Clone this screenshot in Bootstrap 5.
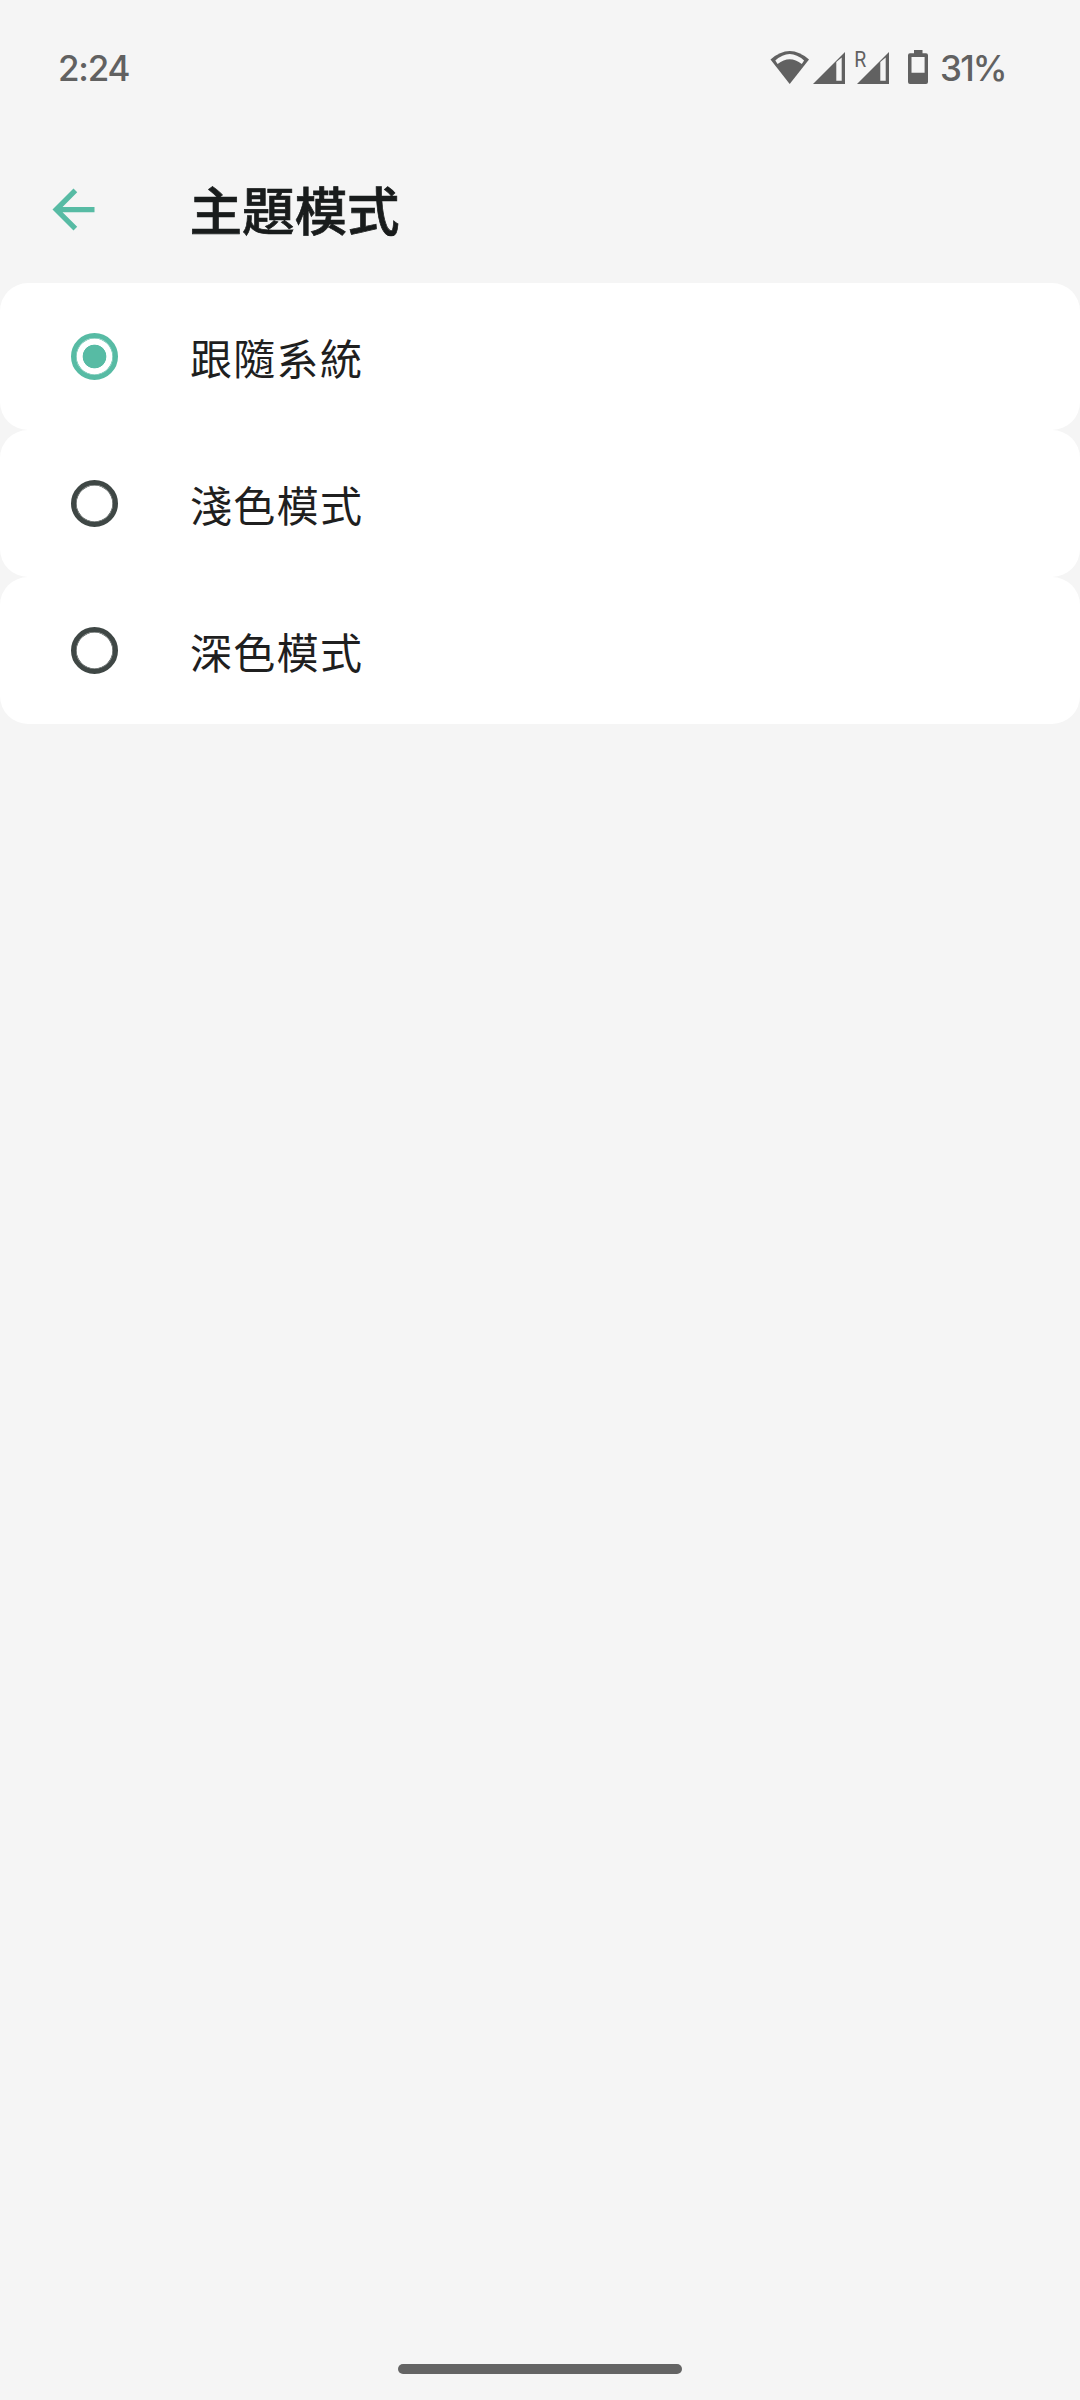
<!DOCTYPE html>
<html lang="zh-Hant">
<head>
<meta charset="utf-8">
<meta name="viewport" content="width=device-width, initial-scale=1">
<title>主題模式</title>
<link href="https://cdn.jsdelivr.net/npm/bootstrap@5.3.0/dist/css/bootstrap.min.css" rel="stylesheet">
<style>
body { background: #f5f5f5; font-family: "Noto Sans CJK TC", sans-serif; color: #1f1f1f; }
.screen { height: 2400px; }
.status-bar { height: 136px; padding: 0 0 0 58px; font: 500 35px/1 Inter, sans-serif; color: #616161; }
.clock { letter-spacing: -1.2px; }
.battery-level { width: 140px; margin-left: 10px; letter-spacing: -1.8px; }
.status-icons { width: 160px; height: 44px; }
.app-bar { height: 147px; padding-left: 42px; }
.back-btn { width: 63px; height: 63px; color: #57bba4; margin-right: 84.5px; }
.app-title { font-size: 52.5px; font-weight: 500; line-height: 76px; color: #191c1c; padding-bottom: 3px; -webkit-text-stroke: .7px; }
.theme-option { height: 147px; border-radius: 28px; padding-left: 71px; }
.theme-option .form-check-input { width: 47px; height: 47px; border: 5px solid #3f4745; background: none; box-shadow: inset 0 0 0 .6px #3f4745; margin: 0 72px 0 0; }
.theme-option .form-check-input:checked { border-color: #57bba4; box-shadow: inset 0 0 0 .6px #57bba4; background: radial-gradient(circle, #57bba4 11.5px, transparent 12.2px) center; }
.option-label { font-size: 42px; line-height: 60px; letter-spacing: 1.3px; }
.home-pill { width: 284px; height: 10px; background: #646464; margin-bottom: 26px; }
</style>
<script src="https://cdn.jsdelivr.net/npm/bootstrap@5.3.0/dist/js/bootstrap.bundle.min.js"></script>
</head>
<body>
<div class="screen d-flex flex-column overflow-hidden">
  <header class="status-bar d-flex align-items-center justify-content-between">
    <span class="clock">2:24</span>
    <div class="d-flex align-items-center">
      <svg class="status-icons" viewBox="770 46 160 44" fill="#616161">
        <path d="M770.5 59.5Q789.7 42.5 809 59.5L789.7 84Z"/>
        <path d="M775.3 60.5Q789.7 47.500 804.100 60.5L801.800 64Q789.7 54.500 777.600 64Z" fill="#f5f5f5"/>
        <path fill-rule="evenodd" d="M813 84L845 52V84ZM836.300 62L841.700 57.500V80.700H836.300Z"/>
        <path fill-rule="evenodd" d="M857 84L889 52V84ZM880.300 62L885.700 57.500V80.700H880.300Z"/>
        <text x="854.300" y="67" font-family="Roboto, sans-serif" font-size="22" font-weight="400" letter-spacing="0" textLength="12" lengthAdjust="spacingAndGlyphs">R</text>
        <path fill-rule="evenodd" d="M914 50H922.500V53.300H926Q928 53.300 928 55.300V82Q928 84 926 84H910Q908 84 908 82V55.300Q908 53.300 910 53.300H914ZM911.500 57V72.700H924.600V57Z"/>
      </svg>
      <span class="battery-level">31%</span>
    </div>
  </header>
  <nav class="app-bar d-flex align-items-center">
    <button class="back-btn btn p-0 border-0 d-flex" aria-label="返回">
      <svg viewBox="0 0 24 24" width="63" height="63" fill="currentColor"><path d="M20 11H7.830L13.420 5.410L12 4L4 12L12 20L13.410 18.590L7.830 13H20Z"/></svg>
    </button>
    <h1 class="app-title m-0">主題模式</h1>
  </nav>
  <main class="d-flex flex-column">
    <label class="theme-option bg-white d-flex align-items-center">
      <input class="form-check-input" type="radio" name="theme" checked>
      <span class="option-label">跟隨系統</span>
    </label>
    <label class="theme-option bg-white d-flex align-items-center">
      <input class="form-check-input" type="radio" name="theme">
      <span class="option-label">淺色模式</span>
    </label>
    <label class="theme-option bg-white d-flex align-items-center">
      <input class="form-check-input" type="radio" name="theme">
      <span class="option-label">深色模式</span>
    </label>
  </main>
  <div class="home-pill rounded-pill mt-auto mx-auto"></div>
</div>
</body>
</html>
